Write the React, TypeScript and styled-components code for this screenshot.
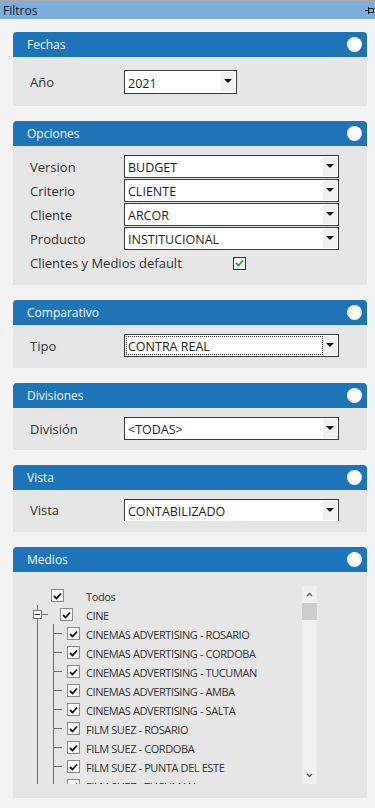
import React from 'react';
import styled, { createGlobalStyle } from 'styled-components';

const GlobalStyle = createGlobalStyle`
  body {
    margin: 0;
    background: #f3f3f3;
    font-family: 'Open Sans', 'Noto Sans', sans-serif;
    color: #333;
  }
`;

const Page = styled.div`
  width: 375px;
  height: 808px;
  overflow: hidden;
  background: #f3f3f3;
`;

const TitleBar = styled.div`
  height: 18px;
  border-top: 1px solid #a8a8a8;
  background: #7aaedb;
  display: flex;
  align-items: center;
  justify-content: space-between;
  padding: 0 1px 0 3px;
  font-size: 12px;
  color: #1a1a1a;
`;

const Panels = styled.div`
  display: flex;
  flex-direction: column;
  gap: 15px;
  padding: 13px 8px 0 13px;
`;

const Panel = styled.section``;

const PanelHeader = styled.div`
  height: 25px;
  background: #1e74b8;
  border-radius: 4px 4px 0 0;
  display: flex;
  align-items: center;
  justify-content: space-between;
  padding: 0 5px 0 14px;
  font-size: 12px;
  color: #f4f8fc;
`;

const Knob = styled.span`
  width: 15px;
  height: 15px;
  border-radius: 50%;
  background: radial-gradient(circle at 40% 35%, #ffffff 60%, #d6d6d6 100%);
`;

const PanelBody = styled.div<{ $pad: string }>`
  background: #e6e6e6;
  padding: ${(p) => p.$pad};
  display: flex;
  flex-direction: column;
  gap: 1px;
`;

const Row = styled.div<{ $h?: number }>`
  display: flex;
  align-items: center;
  height: ${(p) => p.$h ?? 23}px;
`;

const Label = styled.span<{ $w?: number }>`
  width: ${(p) => p.$w ?? 94}px;
  flex-shrink: 0;
  font-size: 13px;
  color: #333;
`;

const Field = styled.div<{ $w: number; $h?: number; $clip?: boolean }>`
  box-sizing: border-box;
  width: ${(p) => p.$w}px;
  height: ${(p) => p.$h ?? 23}px;
  border: 1px solid #3a3a3a;
  ${(p) => (p.$clip ? 'border-bottom: none;' : '')}
  background: #fff;
  display: flex;
  align-items: stretch;
`;

const Value = styled.span<{ $focus?: boolean }>`
  flex: 1;
  display: flex;
  align-items: center;
  padding: 2px 0 0 1px;
  margin: 1px 0 1px 1px;
  font-size: 12.5px;
  color: #222;
  border: 1px dotted ${(p) => (p.$focus ? '#333' : 'transparent')};
  white-space: nowrap;
  overflow: hidden;
`;

const Arrow = styled.span`
  width: 14px;
  margin: 1px 1px 1px 0;
  background: #f0f0f0;
  display: flex;
  align-items: center;
  justify-content: center;
  &::after {
    content: '';
    border-left: 4px solid transparent;
    border-right: 4px solid transparent;
    border-top: 4px solid #111;
    margin-top: -2px;
  }
`;

const Check = styled.span<{ $dark?: boolean; $left?: number }>`
  box-sizing: border-box;
  width: 13px;
  height: 13px;
  margin-left: ${(p) => p.$left ?? 0}px;
  flex-shrink: 0;
  background: #fff;
  border: 1px solid ${(p) => (p.$dark ? '#1f3550' : '#8a8a8a')};
  display: flex;
  align-items: center;
  justify-content: center;
  position: relative;
`;

const TreeBox = styled.div`
  display: flex;
  width: 287px;
  height: 198px;
  overflow: hidden;
`;

const TreeItems = styled.div`
  flex: 1;
  overflow: hidden;
`;

const TreeRow = styled.div`
  display: flex;
  align-items: center;
  height: 19px;
`;

const Gutter = styled.div`
  position: relative;
  width: 56px;
  height: 19px;
  flex-shrink: 0;
  display: flex;
  align-items: center;
`;

const Lines = styled.svg`
  position: absolute;
  left: 0;
  top: 0;
`;

const TreeText = styled.span`
  font-size: 11px;
  color: #333;
  white-space: nowrap;
  letter-spacing: -0.4px;
  padding-top: 2px;
`;

const ScrollBar = styled.div`
  width: 15px;
  background: #f0f0f0;
  display: flex;
  flex-direction: column;
  align-items: center;
`;

const ScrollBtn = styled.div`
  height: 17px;
  width: 15px;
  display: flex;
  align-items: center;
  justify-content: center;
`;

const Thumb = styled.div`
  width: 15px;
  height: 17px;
  background: #cdcdcd;
`;

const ScrollTrack = styled.div`
  flex: 1;
`;

const Pin = () => (
  <svg width="9" height="9" viewBox="0 0 9 9">
    <path d="M0 4.5H3M3.5 1V8M3.5 2.5H8.5V6.5H3.5" stroke="#111" fill="none" />
  </svg>
);

const Tick = ({ color }: { color: string }) => (
  <svg width="9" height="8" viewBox="0 0 9 8">
    <path d="M1 4L3.5 6.5L8 1.5" stroke={color} strokeWidth="1.8" fill="none" />
  </svg>
);

const Chevron = ({ up }: { up?: boolean }) => (
  <svg width="7" height="5" viewBox="0 0 7 5">
    <path d={up ? 'M1 4L3.5 1.5L6 4' : 'M1 1L3.5 3.5L6 1'} stroke="#606060" strokeWidth="1.3" fill="none" />
  </svg>
);

type SelectProps = { value: string; w?: number; h?: number; focus?: boolean; clip?: boolean };

const Select = ({ value, w = 215, h, focus, clip }: SelectProps) => (
  <Field $w={w} $h={h} $clip={clip}>
    <Value $focus={focus}>{value}</Value>
    <Arrow />
  </Field>
);

type Node = { label: string; kind: 'root' | 'group' | 'child' };

const nodes: Node[] = [
  { label: 'Todos', kind: 'root' },
  { label: 'CINE', kind: 'group' },
  { label: 'CINEMAS ADVERTISING - ROSARIO', kind: 'child' },
  { label: 'CINEMAS ADVERTISING - CORDOBA', kind: 'child' },
  { label: 'CINEMAS ADVERTISING - TUCUMAN', kind: 'child' },
  { label: 'CINEMAS ADVERTISING - AMBA', kind: 'child' },
  { label: 'CINEMAS ADVERTISING - SALTA', kind: 'child' },
  { label: 'FILM SUEZ - ROSARIO', kind: 'child' },
  { label: 'FILM SUEZ - CORDOBA', kind: 'child' },
  { label: 'FILM SUEZ - PUNTA DEL ESTE', kind: 'child' },
  { label: 'FILM SUEZ - TUCUMAN', kind: 'child' },
];

const checkLeft = { root: 21, group: 30, child: 37 };

const TreeLines = ({ kind }: { kind: Node['kind'] }) => {
  if (kind === 'root') return null;
  return (
    <Lines width="56" height="19" viewBox="0 0 56 19">
      {kind === 'group' ? (
        <g stroke="#707070" fill="none">
          <path d="M7.5 0V5M7.5 14V19M12.5 9.5H18" />
          <rect x="3.5" y="5.5" width="8" height="8" fill="#fff" stroke="#7a7a7a" />
          <path d="M5 9.5H10" stroke="#222" />
        </g>
      ) : (
        <path d="M7.5 0V19M23.5 0V19M23.5 9.5H32" stroke="#707070" fill="none" />
      )}
    </Lines>
  );
};

const Header = ({ title }: { title: string }) => (
  <PanelHeader>
    {title}
    <Knob />
  </PanelHeader>
);

export default function App() {
  return (
    <Page>
      <GlobalStyle />
      <TitleBar>
        Filtros
        <Pin />
      </TitleBar>
      <Panels>
        <Panel>
          <Header title="Fechas" />
          <PanelBody $pad="13px 17px 12px">
            <Row $h={24}>
              <Label>Año</Label>
              <Select value="2021" w={113} h={24} />
            </Row>
          </PanelBody>
        </Panel>

        <Panel>
          <Header title="Opciones" />
          <PanelBody $pad="9px 17px 10px">
            <Row>
              <Label>Version</Label>
              <Select value="BUDGET" />
            </Row>
            <Row>
              <Label>Criterio</Label>
              <Select value="CLIENTE" />
            </Row>
            <Row>
              <Label>Cliente</Label>
              <Select value="ARCOR" />
            </Row>
            <Row>
              <Label>Producto</Label>
              <Select value="INSTITUCIONAL" />
            </Row>
            <Row $h={24}>
              <Label $w={203}>Clientes y Medios default</Label>
              <Check $dark>
                <Tick color="#2e9a2e" />
              </Check>
            </Row>
          </PanelBody>
        </Panel>

        <Panel>
          <Header title="Comparativo" />
          <PanelBody $pad="9px 17px 11px">
            <Row>
              <Label>Tipo</Label>
              <Select value="CONTRA REAL" focus />
            </Row>
          </PanelBody>
        </Panel>

        <Panel>
          <Header title="Divisiones" />
          <PanelBody $pad="9px 17px 10px">
            <Row>
              <Label>División</Label>
              <Select value="<TODAS>" />
            </Row>
          </PanelBody>
        </Panel>

        <Panel>
          <Header title="Vista" />
          <PanelBody $pad="9px 17px 11px">
            <Row $h={22}>
              <Label>Vista</Label>
              <Select value="CONTABILIZADO" h={22} clip />
            </Row>
          </PanelBody>
        </Panel>

        <Panel>
          <Header title="Medios" />
          <PanelBody $pad="14px 17px 14px">
            <TreeBox>
              <TreeItems>
                {nodes.map((n) => (
                  <TreeRow key={n.label}>
                    <Gutter>
                      <TreeLines kind={n.kind} />
                      <Check $left={checkLeft[n.kind]}>
                        <Tick color="#111" />
                      </Check>
                    </Gutter>
                    <TreeText>{n.label}</TreeText>
                  </TreeRow>
                ))}
              </TreeItems>
              <ScrollBar>
                <ScrollBtn>
                  <Chevron up />
                </ScrollBtn>
                <Thumb />
                <ScrollTrack />
                <ScrollBtn>
                  <Chevron />
                </ScrollBtn>
              </ScrollBar>
            </TreeBox>
          </PanelBody>
        </Panel>
      </Panels>
    </Page>
  );
}
